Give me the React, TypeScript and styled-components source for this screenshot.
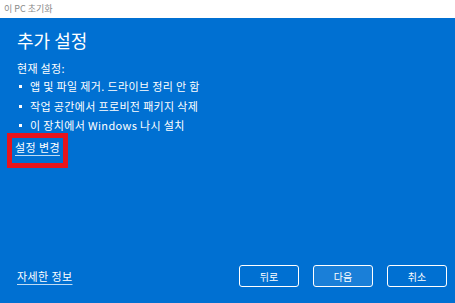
import styled, { createGlobalStyle } from "styled-components";

const GlobalStyle = createGlobalStyle`
  html, body {
    margin: 0;
    padding: 0;
    background: #ffffff;
  }
  body {
    font-family: "Noto Sans CJK KR", "Noto Sans", sans-serif;
  }
`;

const Window = styled.div`
  width: 455px;
  height: 303px;
  display: flex;
  flex-direction: column;
  overflow: hidden;
`;

const TitleBar = styled.div`
  height: 18px;
  flex: none;
  background: #ffffff;
  color: #8a8a8a;
  font-size: 9px;
  line-height: 18px;
  padding-left: 4px;
`;

const Body = styled.div`
  flex: 1;
  background: #0070d2;
  color: #ffffff;
  display: flex;
  flex-direction: column;
  padding: 9px 8px 16px 17px;
`;

const Title = styled.h1`
  margin: 0;
  font-size: 18px;
  font-weight: 400;
  line-height: 26px;
`;

const Label = styled.div`
  margin-top: 6px;
  font-size: 11px;
  line-height: 18px;
  letter-spacing: 0.3px;
`;

const List = styled.ul`
  list-style: none;
  margin: 0;
  padding: 0;
`;

const Item = styled.li`
  font-size: 11px;
  line-height: 19.5px;
  letter-spacing: 0.35px;
  display: flex;
  align-items: center;
  &::before {
    content: "";
    width: 3px;
    height: 3px;
    background: #ffffff;
    margin-right: 8px;
    margin-left: 2px;
  }
`;

const Highlight = styled.div`
  align-self: flex-start;
  display: flex;
  margin-left: -10px;
  margin-top: -3px;
  border: 5px solid #e8141c;
  padding: 2px 3px 9px 3px;
`;

const Link = styled.a`
  color: #ffffff;
  font-size: 11px;
  line-height: 14px;
  letter-spacing: 0.4px;
  text-decoration: underline;
  text-decoration-color: rgba(255, 255, 255, 0.75);
  text-underline-offset: 3px;
`;

const Footer = styled.div`
  margin-top: auto;
  display: flex;
  align-items: center;
  justify-content: space-between;
`;

const Buttons = styled.div`
  display: flex;
  gap: 14px;
`;

const Button = styled.button<{ $primary?: boolean }>`
  width: 60px;
  height: 22px;
  border: 1.5px solid #ffffff;
  border-radius: 3px;
  background: ${(p) => (p.$primary ? "#1a7fd8" : "transparent")};
  color: #ffffff;
  font-family: inherit;
  font-size: 10px;
  padding: 0;
`;

export default function App() {
  return (
    <>
      <GlobalStyle />
      <Window>
        <TitleBar>이 PC 초기화</TitleBar>
        <Body>
          <Title>추가 설정</Title>
          <Label>현재 설정:</Label>
          <List>
            <Item>앱 및 파일 제거. 드라이브 정리 안 함</Item>
            <Item>작업 공간에서 프로비전 패키지 삭제</Item>
            <Item>이 장치에서 Windows 나시 설치</Item>
          </List>
          <Highlight>
            <Link>설정 변경</Link>
          </Highlight>
          <Footer>
            <Link>자세한 정보</Link>
            <Buttons>
              <Button>뒤로</Button>
              <Button $primary>다음</Button>
              <Button>취소</Button>
            </Buttons>
          </Footer>
        </Body>
      </Window>
    </>
  );
}
